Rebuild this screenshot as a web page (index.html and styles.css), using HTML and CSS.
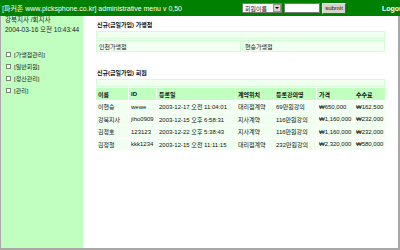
FILE: index.html
```html
<!DOCTYPE html>
<html lang="ko">
  <head>
    <meta charset="UTF-8" />
    <title>administrative menu</title>
    <link rel="stylesheet" href="styles.css">
  </head>
  <body>
    <div class="top">
      <span class="top-title">[파커존 www.picksphone.co.kr] administrative menu v 0,50</span>
      <form class="search">
        <span class="sel">회원이름<span class="sel-btn"></span></span>
        <input class="inp" type="text" />
        <button class="btn" type="button">submit</button>
      </form>
      <a class="logout">Logout</a>
    </div>
    <div class="frames">
      <div class="side">
        <div class="who">강북지사 /회지사</div>
        <div class="when">2004-03-16 오전 10:43:44</div>
        <ul class="menu">
          <li><span class="chk"></span>[가맹점관리]</li>
          <li><span class="chk"></span>[일반회원]</li>
          <li><span class="chk"></span>[정산관리]</li>
          <li><span class="chk"></span>[관리]</li>
        </ul>
      </div>
      <div class="main">
        <h2>신규(금일가입) 가맹점</h2>
        <table class="tbl shops">
          <colgroup><col class="half"><col></colgroup>
          <tr class="blank"><td colspan="2"></td></tr>
          <tr><td>인천가맹점</td><td>현승가맹점</td></tr>
        </table>

        <h2 class="second">신규(금일가입) 회원</h2>
        <table class="tbl members">
          <colgroup>
            <col class="c1"><col class="c2"><col class="c3"><col class="c4">
            <col class="c5"><col class="c6"><col>
          </colgroup>
          <tr class="blank"><td colspan="7"></td></tr>
          <tr class="head">
            <th>이름</th>
            <th>ID</th>
            <th>등록일</th>
            <th>계약위치</th>
            <th>등록강의명</th>
            <th>가격</th>
            <th>수수료</th>
          </tr>
          <tr><td>이현승</td><td>wewe</td><td>2003-12-17 오전 11:04:01</td><td>대리점계약</td><td>69만원강의</td><td>₩650,000</td><td>₩162,500</td></tr>
          <tr><td>강북지사</td><td>jiho0909</td><td>2003-12-15 오후 6:58:31</td><td>지사계약</td><td>116만원강의</td><td>₩1,160,000</td><td>₩232,000</td></tr>
          <tr><td>김정호</td><td>123123</td><td>2003-12-22 오후 5:38:43</td><td>지사계약</td><td>116만원강의</td><td>₩1,160,000</td><td>₩232,000</td></tr>
          <tr><td>김정철</td><td>kkk1234</td><td>2003-12-15 오전 11:11:15</td><td>대리점계약</td><td>232만원강의</td><td>₩2,320,000</td><td>₩580,000</td></tr>
        </table>
      </div>
    </div>
  </body>
</html>
```

FILE: styles.css
```css
* {
  padding: 0;
  margin: 0;
  box-sizing: border-box;
}
body {
  width: 400px;
  height: 250px;
  overflow: hidden;
  font-family: "Liberation Sans", "Noto Sans CJK KR", sans-serif;
  font-size: 6px;
  color: #111111;
  background-color: #ffffff;
}
.top {
  height: 16px;
  background-color: #008000;
  color: #ffffff;
  display: flex;
  align-items: center;
  padding-left: 2px;
  white-space: nowrap;
  font-size: 7px;
  overflow: hidden;
}
.top-title {
  flex: none;
  width: 240px;
}
.search {
  flex: none;
  display: flex;
  align-items: center;
  gap: 2px;
}
.sel {
  display: flex;
  align-items: center;
  justify-content: space-between;
  width: 40px;
  height: 10px;
  padding-left: 2px;
  background-color: #ffffff;
  border: 1px solid #7a7a7a;
  color: #111111;
  font-size: 6px;
}
.sel-btn {
  width: 8px;
  height: 8px;
  background-color: #d8d4cc;
  border: 1px solid #9a968e;
  position: relative;
}
.sel-btn::after {
  content: "";
  position: absolute;
  left: 1px;
  top: 2px;
  border-left: 2px solid transparent;
  border-right: 2px solid transparent;
  border-top: 2px solid #000000;
}
.inp {
  width: 36px;
  height: 10px;
  border: 1px solid #7a7a7a;
  background: #ffffff;
}
.btn {
  width: 24px;
  height: 11px;
  font-family: inherit;
  font-size: 6px;
  color: #111111;
  background-color: #d8d4cc;
  border: 1px solid #555555;
  border-top-color: #eeeeee;
  border-left-color: #eeeeee;
}
.logout {
  flex: none;
  margin-left: 36px;
  font-weight: bold;
  color: #ffffff;
}
.frames {
  display: flex;
  height: 234px;
  border-left: 1px solid #a8a8a8;
  border-right: 2px solid #a8a8a8;
  border-bottom: 2px solid #a8a8a8;
}
.side {
  flex: none;
  width: 82px;
  background-color: #c0ffc0;
  padding: 0 0 0 4px;
  color: #222222;
  font-size: 6.5px;
  white-space: nowrap;
}
.who {
  line-height: 8px;
}
.when {
  margin-top: 2px;
  line-height: 8px;
}
.menu {
  list-style: none;
  margin-top: 14px;
  font-size: 6px;
}
.menu li {
  display: flex;
  align-items: center;
  height: 12px;
  padding-left: 1px;
}
.chk {
  width: 5px;
  height: 5px;
  border: 1px solid #808080;
  background-color: #ffffff;
  margin-right: 3px;
}
.main {
  flex: 1;
  padding: 4px 0 0 12px;
}
h2 {
  font-size: 6px;
  font-weight: bold;
  line-height: 10px;
  color: #111111;
  padding-left: 2px;
}
h2.second {
  margin-top: 15px;
}
.tbl {
  width: 291px;
  table-layout: fixed;
  border-collapse: separate;
  border-spacing: 1px;
}
.tbl td,
.tbl th {
  background-color: #f0fff0;
  text-align: left;
  font-weight: normal;
  padding: 0 1px 0 2px;
  height: 12px;
  white-space: nowrap;
  overflow: hidden;
}
.shops td {
  border: 1px solid #d4fcd4;
}
.tbl .blank td {
  border: 1px solid #d4fcd4;
  height: 8px;
}
.half {
  width: 145px;
}
.members .head th {
  background-color: #c0ffc0;
  font-weight: bold;
}
.members td {
  height: 11.5px;
}
.c1 { width: 32px; }
.c2 { width: 27px; }
.c3 { width: 78px; }
.c4 { width: 37px; }
.c5 { width: 42px; }
.c6 { width: 36px; }
```
